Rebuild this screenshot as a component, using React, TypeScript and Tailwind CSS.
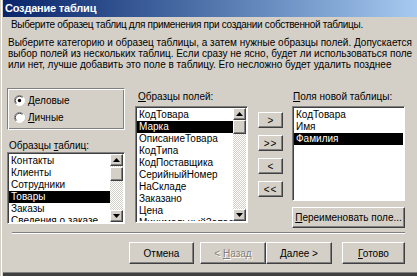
import React from "react";

const RAISED =
  "border border-t-white border-l-white border-r-[#404040] border-b-[#404040] shadow-[inset_-1px_-1px_#808080] bg-[#d4d0c8]";
const SUNKEN =
  "border border-t-[#808080] border-l-[#808080] border-r-white border-b-white shadow-[inset_1px_1px_#404040]";

const tableSamples = ["Контакты", "Клиенты", "Сотрудники", "Товары", "Заказы", "Сведения о заказе"];
const fieldSamples = [
  "КодТовара",
  "Марка",
  "ОписаниеТовара",
  "КодТипа",
  "КодПоставщика",
  "СерийныйНомер",
  "НаСкладе",
  "Заказано",
  "Цена",
  "МинимальныйЗапас",
];
const newFields = ["КодТовара", "Имя", "Фамилия"];

function Arrow({ up }: { up?: boolean }) {
  return (
    <svg width="7" height="4" viewBox="0 0 7 4">
      <path d={up ? "M0 4 L3.5 0 L7 4 Z" : "M0 0 L7 0 L3.5 4 Z"} fill="#000" />
    </svg>
  );
}

function ScrollBar({ thumbTop }: { thumbTop: number }) {
  return (
    <div className="w-[13px] flex flex-col bg-[repeating-conic-gradient(#ffffff_0_25%,#d4d0c8_0_50%)] bg-size-[2px_2px]">
      <div className={`h-[12px] flex items-center justify-center ${RAISED}`}>
        <Arrow up />
      </div>
      <div className={`h-[14px] ${RAISED}`} style={{ marginTop: thumbTop }} />
      <div className="flex-1" />
      <div className={`h-[12px] flex items-center justify-center ${RAISED}`}>
        <Arrow />
      </div>
    </div>
  );
}

function ListBox({
  items,
  selected,
  scroll,
  thumbTop = 0,
  className,
}: {
  items: string[];
  selected: number;
  scroll?: boolean;
  thumbTop?: number;
  className: string;
}) {
  return (
    <div className={`${SUNKEN} bg-white flex p-px ${className}`}>
      <div className="flex-1 min-w-0 overflow-hidden pt-px">
        {items.map((it, i) => (
          <div
            key={it}
            className={`h-[12px] leading-[12px] pl-[2px] whitespace-nowrap ${
              i === selected ? "bg-black text-white" : "text-black"
            }`}
          >
            {it}
          </div>
        ))}
      </div>
      {scroll && <ScrollBar thumbTop={thumbTop} />}
    </div>
  );
}

function Radio({ checked }: { checked?: boolean }) {
  return (
    <svg width="11" height="11" viewBox="0 0 12 12">
      <circle cx="6" cy="6" r="5.5" fill="#ffffff" />
      <path d="M2.1 9.9 A5.5 5.5 0 0 1 9.9 2.1" stroke="#808080" strokeWidth="1" fill="none" />
      <path d="M2.8 9.2 A4.5 4.5 0 0 1 9.2 2.8" stroke="#404040" strokeWidth="1" fill="none" />
      <path d="M9.9 2.1 A5.5 5.5 0 0 1 2.1 9.9" stroke="#ffffff" strokeWidth="1" fill="none" />
      {checked && <circle cx="6" cy="6" r="1.8" fill="#000" />}
    </svg>
  );
}

function Btn({ children, className, disabled }: { children: React.ReactNode; className: string; disabled?: boolean }) {
  return (
    <div
      className={`${RAISED} flex items-center justify-center whitespace-nowrap ${
        disabled ? "text-[#808080] [text-shadow:1px_1px_#ffffff]" : "text-black"
      } ${className}`}
    >
      {children}
    </div>
  );
}

export default function App() {
  return (
    <div className="w-[417px] h-[276px] flex bg-[#d4d0c8] overflow-hidden font-['Liberation_Sans',Arial,sans-serif] text-[10px] text-black">
      {/* window frame left */}
      <div className="w-[3px] flex shrink-0">
        <div className="w-px bg-[#d4d0c8]" />
        <div className="w-px bg-white" />
        <div className="w-px bg-[#d4d0c8]" />
      </div>

      <div className="flex-1 flex flex-col">
        {/* title bar */}
        <div className="h-[17px] shrink-0 flex items-center pl-[2px] bg-gradient-to-r from-[#0a246a] to-[#a6caf0]">
          <span className="text-white font-bold text-[11px] tracking-[-0.2px]">Создание таблиц</span>
        </div>

        <div className="flex-1 flex flex-col">
          <div className="mt-[2px] pl-[8px] h-[12px] leading-[12px] whitespace-nowrap tracking-[-0.3px]">
            Выберите образец таблиц для применения при создании собственной таблицы.
          </div>
          <div className="mt-[6px] pl-[5px] leading-[11px] whitespace-nowrap">
            <div>Выберите категорию и образец таблицы, а затем нужные образцы полей. Допускается</div>
            <div>выбор полей из нескольких таблиц. Если сразу не ясно, будет ли использоваться поле</div>
            <div>или нет, лучше добавить это поле в таблицу. Его несложно будет удалить позднее</div>
          </div>

          {/* main area */}
          <div className="mt-[18px] h-[140px] flex items-start pl-[4px]">
            {/* left column */}
            <div className="w-[118px] flex flex-col">
              <div className="h-[42px] border border-t-[#808080] border-l-[#808080] border-r-white border-b-white shadow-[inset_1px_1px_#ffffff,inset_-1px_-1px_#808080] flex flex-col justify-center gap-[5px] pl-[6px]">
                <div className="flex items-center gap-[3px] h-[12px]">
                  <Radio checked />
                  <span>
                    <u>Д</u>еловые
                  </span>
                </div>
                <div className="flex items-center gap-[3px] h-[12px]">
                  <Radio />
                  <span>
                    <u>Л</u>ичные
                  </span>
                </div>
              </div>
              <div className="mt-[10px] h-[12px] leading-[12px] pl-[2px]">
                Образцы <u>т</u>аблиц:
              </div>
              <ListBox items={tableSamples} selected={3} scroll thumbTop={1} className="h-[72px]" />
            </div>

            {/* middle column */}
            <div className="ml-[10px] w-[113px] mt-[3px] flex flex-col">
              <div className="h-[12px] leading-[12px] pl-[3px]">
                <u>О</u>бразцы полей:
              </div>
              <ListBox items={fieldSamples} selected={1} scroll className="mt-[3px] h-[117px]" />
            </div>

            {/* arrow buttons */}
            <div className="ml-[10px] w-[25px] mt-[24px] flex flex-col gap-[7px]">
              <Btn className="h-[16px]">&gt;</Btn>
              <Btn className="h-[16px] tracking-[1px]">&gt;&gt;</Btn>
              <Btn className="h-[16px]">&lt;</Btn>
              <Btn className="h-[16px] tracking-[1px]">&lt;&lt;</Btn>
            </div>

            {/* right column */}
            <div className="ml-[9px] w-[113px] mt-[3px] flex flex-col">
              <div className="h-[12px] leading-[12px] pl-[1px]">
                <u>П</u>оля новой таблицы:
              </div>
              <ListBox items={newFields} selected={2} className="mt-[3px] h-[95px]" />
              <Btn className="mt-[6px] h-[21px]">
                <span>
                  <u>П</u>ереименовать поле...
                </span>
              </Btn>
            </div>
          </div>

          {/* separator */}
          <div className="mt-[4px] ml-[9px] mr-[12px] h-[2px] border-t border-t-[#808080] border-b border-b-white" />

          {/* bottom buttons */}
          <div className="mt-[8px] flex justify-end pr-[12px]">
            <Btn className="w-[65px] h-[22px]">Отмена</Btn>
            <Btn className="ml-[6px] w-[66px] h-[22px]" disabled>
              <span>
                &lt; <u>Н</u>азад
              </span>
            </Btn>
            <Btn className="w-[66px] h-[22px]">
              <span>
                <u>Д</u>алее &gt;
              </span>
            </Btn>
            <Btn className="ml-[10px] w-[63px] h-[22px]">
              <span>
                <u>Г</u>отово
              </span>
            </Btn>
          </div>

          <div className="flex-1" />
        </div>

        {/* bottom frame */}
        <div className="h-[4px] shrink-0 border-t border-t-[#808080] bg-[#404040]" />
      </div>
    </div>
  );
}
